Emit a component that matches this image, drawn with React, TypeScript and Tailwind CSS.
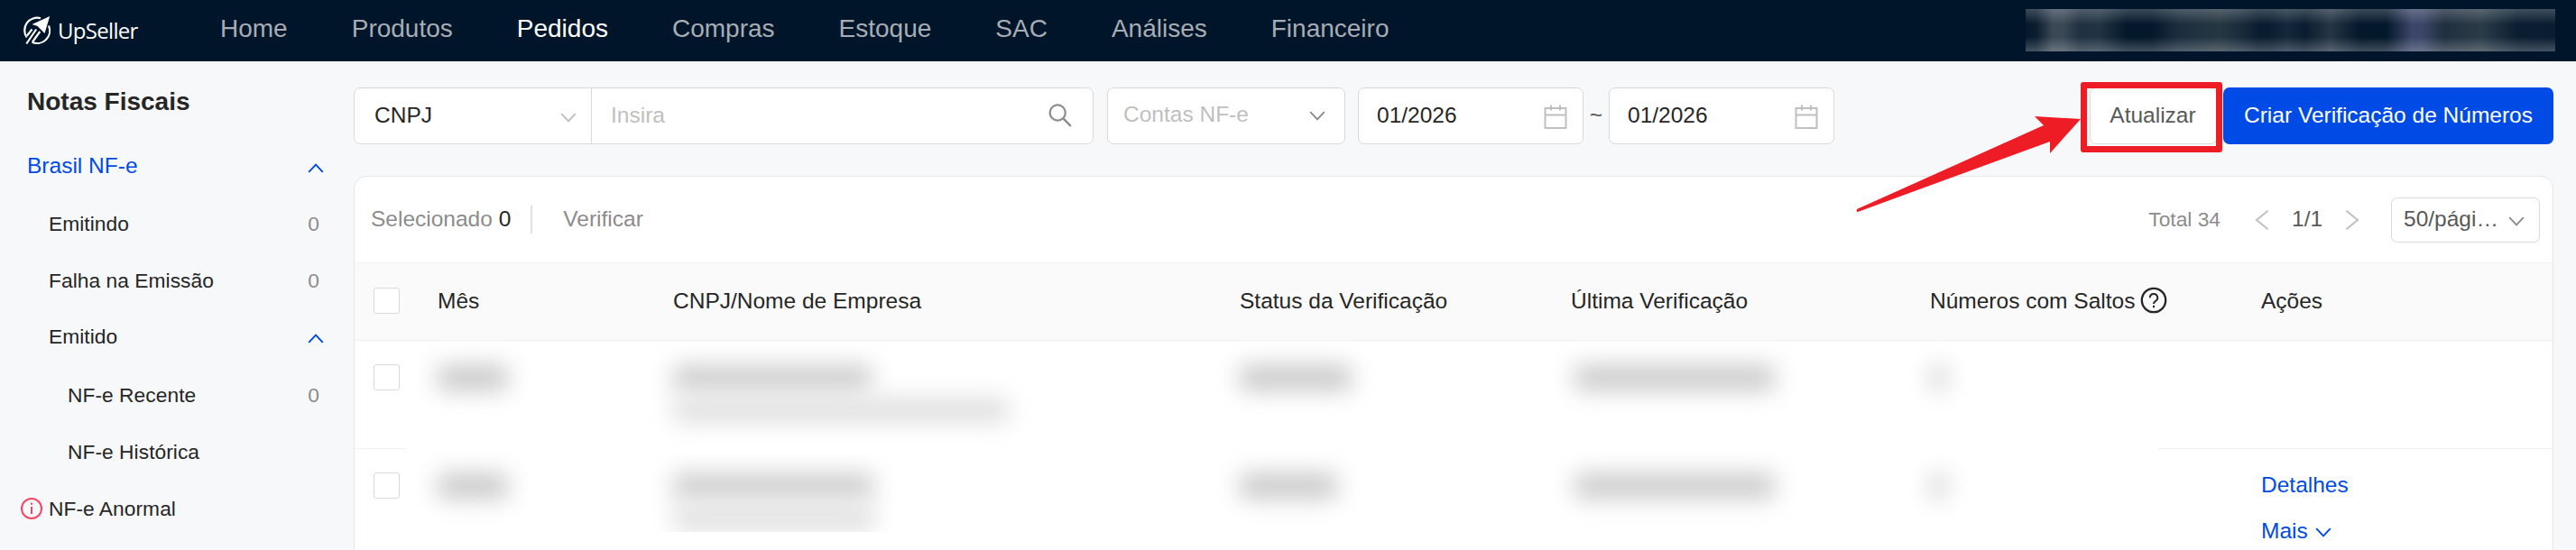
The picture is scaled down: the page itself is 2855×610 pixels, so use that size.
import type { ReactNode } from "react";
import clsx from "clsx";

interface IconProps {
  className?: string;
}

interface SidebarEntry {
  label: string;
  count?: number;
  open?: boolean;
  nested?: boolean;
  alert?: boolean;
  height: string;
}

const navItems = [
  "Home",
  "Produtos",
  "Pedidos",
  "Compras",
  "Estoque",
  "SAC",
  "Análises",
  "Financeiro",
];

const sidebarItems: SidebarEntry[] = [
  { label: "Emitindo", count: 0, height: "h-16" },
  { label: "Falha na Emissão", count: 0, height: "h-[62px]" },
  { label: "Emitido", open: true, height: "h-[63px]" },
  { label: "NF-e Recente", count: 0, nested: true, height: "h-[66px]" },
  { label: "NF-e Histórica", nested: true, height: "h-[60px]" },
  { label: "NF-e Anormal", alert: true, height: "h-[66px]" },
];

const gridCols = "grid grid-cols-[92px_261px_628px_367px_398px_367px_1fr]";

function Chevron({ className }: IconProps) {
  return (
    <svg
      viewBox="0 0 18 11"
      className={clsx("h-[11px] w-[18px] shrink-0", className)}
      fill="none"
      stroke="currentColor"
      strokeWidth="1.9"
    >
      <path d="M1.2 1.2 9 9.4l7.8-8.2" />
    </svg>
  );
}

function PageArrow({ className }: IconProps) {
  return (
    <svg
      viewBox="0 0 16 24"
      className={clsx("h-6 w-4", className)}
      fill="none"
      stroke="currentColor"
      strokeWidth="2"
    >
      <path d="M14.5 1.8 2 12l12.5 10.2" />
    </svg>
  );
}

function SearchIcon() {
  return (
    <svg viewBox="0 0 26 26" className="mb-px size-[26px]" fill="none" stroke="#8c8c8c" strokeWidth="2.2">
      <circle cx="10.2" cy="10" r="8.6" />
      <path d="m16.2 16.2 8.6 8.8" strokeWidth="2.5" />
    </svg>
  );
}

function CalendarIcon() {
  return (
    <svg viewBox="0 0 26 28" className="mt-[3px] h-7 w-[26px]" fill="none" stroke="#bfbfbf" strokeWidth="2">
      <path d="M1.5 4h23v22h-23zM1.5 11.5h23M8 0.5v6M18 0.5v6" />
    </svg>
  );
}

function Logo() {
  return (
    <div className="flex w-[219px] items-center text-white">
      <svg viewBox="0 0 32 32" className="size-8 shrink-0" fill="none" stroke="currentColor">
        <path d="M20 2.2A14 14 0 0 0 4.600 23.500" strokeWidth="2.2" />
        <path d="M29 10.500A14 14 0 0 1 10.500 28.800" strokeWidth="2.2" />
        <path d="M30.200 0 10.500 9 16.500 11 24.500 19z" fill="currentColor" strokeWidth="0" />
        <path d="M10.500 14.500 5 21.500M15.200 14.500 4.300 30.500M19.300 17 11 28.500" strokeWidth="2.200" />
      </svg>
      <span className="ml-[7px] font-['Open_Sans','Noto_Sans',sans-serif] text-[24px] leading-none font-medium tracking-[-0.7px]">
        UpSeller
      </span>
    </div>
  );
}

function Header() {
  return (
    <header className="flex h-[68px] items-center bg-[#001529] pr-[23px] pl-[25px]">
      <Logo />
      <nav className="flex gap-[71px] pb-1 text-[28px] leading-none">
        {navItems.map((item) => (
          <a key={item} className={item === "Pedidos" ? "text-white" : "text-[#a6adb4]"}>
            {item}
          </a>
        ))}
      </nav>
      <div className="relative ml-auto h-[47px] w-[587px] -translate-y-px overflow-hidden bg-[linear-gradient(90deg,#04182b_0,#0b1e30_12px,#3a4856_30px,#3a4856_42px,#203141_60px,#223443_82px,#04182b_112px,#04182b_140px,#1c2d3e_170px,#263743_215px,#192a3b_240px,#0a1d30_258px,#0a1d30_270px,#15283b_290px,#0a1d30_310px,#263545_338px,#04182b_370px,#04182b_400px,#3b4668_428px,#3b4668_440px,#1f2f3f_464px,#2b3c48_505px,#0b1e31_545px,#091c30_587px)]">
        <div className="absolute inset-0 bg-[linear-gradient(180deg,rgba(255,255,255,0.22)_0,rgba(255,255,255,0)_17px,rgba(255,255,255,0)_31px,rgba(255,255,255,0.24)_100%)]" />
      </div>
    </header>
  );
}

function Sidebar() {
  return (
    <aside className="w-[392px] shrink-0 pr-[33px] pl-[30px] text-[22.75px] text-[#262626]">
      <h2 className="flex h-[90px] items-center pb-px text-[28px] font-bold">Notas Fiscais</h2>
      <div className="flex h-[52px] items-center justify-between text-[24.5px] text-[#004be6]">
        Brasil NF-e
        <Chevron className="mt-1 rotate-180" />
      </div>
      <ul className="mt-[6px]">
        {sidebarItems.map((item) => (
          <li key={item.label} className={clsx("flex items-center", item.height)}>
            <span
              className={clsx(
                "flex items-center tracking-[0.05px]",
                item.nested ? "pl-[45px]" : item.alert ? "-ml-[7px]" : "pl-6"
              )}
            >
              {item.alert && (
                <svg viewBox="0 0 24 26" className="mr-[7px] h-[26px] w-6" fill="none" stroke="#f04864">
                  <circle cx="12" cy="13" r="11" strokeWidth="2" />
                  <path d="M12 11v8M12 6.500v2.300" strokeWidth="2" />
                </svg>
              )}
              {item.label}
            </span>
            {item.count !== undefined && (
              <span className="mr-[5px] ml-auto text-[#8c8c8c]">{item.count}</span>
            )}
            {item.open && <Chevron className="mt-1 ml-auto rotate-180 text-[#004be6]" />}
          </li>
        ))}
      </ul>
    </aside>
  );
}

function DateField({ value }: { value: string }) {
  return (
    <div className="flex h-[63px] w-[250px] items-center justify-between rounded-[7px] border border-[#d9d9d9] bg-white pr-[17px] pl-5">
      <span className="pb-[2px]">{value}</span>
      <CalendarIcon />
    </div>
  );
}

function Filters() {
  return (
    <div className="flex items-center text-[24.5px] leading-[28px] text-[#262626]">
      <div className="flex h-[63px] w-[820px] rounded-[7px] border border-[#d9d9d9] bg-white">
        <div className="flex w-[263px] items-center justify-between border-r border-[#d9d9d9] pr-4 pl-[22px]">
          <span className="pb-[2px]">CNPJ</span>
          <Chevron className="mt-1 text-[#bfbfbf]" />
        </div>
        <div className="flex flex-1 items-center justify-between pr-[23px] pl-[21px] text-[#bfbfbf]">
          <span className="pb-[2px]">Insira</span>
          <SearchIcon />
        </div>
      </div>
      <div className="ml-[15px] flex h-[63px] w-[264px] items-center justify-between rounded-[7px] border border-[#d9d9d9] bg-white pr-[21px] pl-[17px] text-[#bfbfbf]">
        <span className="pb-[3px]">Contas NF-e</span>
        <Chevron className="text-[#8c8c8c]" />
      </div>
      <div className="ml-[14px] flex items-center">
        <DateField value="01/2026" />
        <span className="w-[28px] pb-[2px] text-center text-[#595959]">~</span>
        <DateField value="01/2026" />
      </div>
      <div className="relative ml-auto">
        <button className="h-[63px] w-[141px] rounded-[7px] border border-[#d9d9d9] bg-white pr-px pb-[2px] text-[#595959]">
          Atualizar
        </button>
        <div className="absolute -top-[6px] -left-[10px] h-[78px] w-[157px] rounded-[3px] border-[7px] border-[#ee1c25]" />
        <svg viewBox="0 0 252 108" className="absolute top-[31px] -left-[260px] h-[108px] w-[252px]">
          <path
            d="M250 4 199 1l10 10L2 104q-1 3 1 3l213-78v13z"
            fill="#ee1c25"
          />
        </svg>
      </div>
      <button className="ml-[7px] h-[63px] w-[366px] rounded-[7px] bg-[#004be6] pb-[2px] text-white">
        Criar Verificação de Números
      </button>
    </div>
  );
}

function Toolbar() {
  return (
    <div className="flex h-[96px] items-center border-b border-[#f0f0f0] pr-[14px] pl-[18px] text-[24.5px] text-[#8c8c8c]">
      <span>
        Selecionado <span className="text-[#262626]">0</span>
      </span>
      <span className="mr-[34px] ml-[22px] h-[31px] w-[2px] bg-[#e0e0e0]" />
      <span>Verificar</span>
      <div className="ml-auto flex items-center">
        <span className="text-[22.75px]">Total 34</span>
        <PageArrow className="ml-[38px] text-[#bfbfbf]" />
        <span className="ml-[25px] w-[34px] text-[#595959]">1/1</span>
        <PageArrow className="ml-[25px] rotate-180 text-[#bfbfbf]" />
        <div className="ml-[35px] flex h-[50px] w-[165px] items-center justify-between rounded-[7px] border border-[#d9d9d9] pr-[16px] pb-px pl-[13px] text-[#595959]">
          50/pági…
          <Chevron className="mt-1 text-[#8c8c8c]" />
        </div>
      </div>
    </div>
  );
}

function Checkbox() {
  return <span className="block size-[29px] rounded-[3px] border border-[#d9d9d9] bg-white" />;
}

function Masked({ className }: IconProps) {
  return <div className={clsx("rounded-md blur-[13px]", className)} />;
}

interface RowProps {
  companyWidth: string;
  detailWidth: string;
  statusWidth: string;
  maskHeight: string;
  children?: ReactNode;
}

function Row({ companyWidth, detailWidth, statusWidth, maskHeight, children }: RowProps) {
  return (
    <div className={clsx(gridCols, "h-[120px] items-start pt-[26px]")}>
      <div className="pl-[21px]">
        <Checkbox />
      </div>
      <Masked className="mt-px h-[28px] w-[78px] bg-[#c8c8c8]" />
      {/* company name and tax id stay inside the masked area */}
      <div className={clsx("-mt-[20px] -ml-[30px] overflow-hidden pt-[20px] pl-[30px]", maskHeight)}>
        <Masked className={clsx("mt-px h-[28px] bg-[#cccccc]", companyWidth)} />
        <Masked className={clsx("mt-[9px] h-[26px] bg-[#dedede]", detailWidth)} />
      </div>
      <Masked className={clsx("mt-px h-[28px] bg-[#c8c8c8]", statusWidth)} />
      <Masked className="mt-px ml-1 h-[28px] w-[222px] bg-[#cacaca]" />
      <Masked className="mt-px ml-[2px] h-[28px] w-[15px] bg-[#c8c8c8]" />
      <div className="text-[24.5px] leading-[28px] text-[#004be6]">{children}</div>
    </div>
  );
}

function RowDivider() {
  return (
    <div className="-mt-px flex h-px justify-between">
      <span className="w-[57px] bg-[#f0f0f0]" />
      <span className="w-[437px] bg-[#f0f0f0]" />
    </div>
  );
}

function VerificationTable() {
  return (
    <section className="mt-[35px] h-[430px] rounded-t-[14px] border border-[#e4e6ea] bg-white">
      <Toolbar />
      <div
        className={clsx(
          gridCols,
          "h-[86px] items-center border-b border-[#f0f0f0] bg-[#fafafa] text-[24.5px] text-[#262626]"
        )}
      >
        <div className="pb-[2px] pl-[21px]">
          <Checkbox />
        </div>
        <span>Mês</span>
        <span>CNPJ/Nome de Empresa</span>
        <span>Status da Verificação</span>
        <span>Última Verificação</span>
        <span className="flex items-center">
          Números com Saltos
          <svg viewBox="0 0 30 30" className="mb-1 ml-[6px] size-[30px]" fill="none" stroke="currentColor" strokeWidth="2">
            <circle cx="15" cy="15" r="13.200" strokeWidth="2.300" />
            <path d="M10.800 12.200a4.200 4.200 0 1 1 6.300 3.600c-1.500.9-2.100 1.500-2.100 3.200M15 20.800v2.400" />
          </svg>
        </span>
        <span>Ações</span>
      </div>
      <Row companyWidth="w-[220px]" detailWidth="w-[372px]" statusWidth="w-[124px]" maskHeight="h-[114px]" />
      <RowDivider />
      <Row companyWidth="w-[222px]" detailWidth="w-[224px]" statusWidth="w-[108px]" maskHeight="h-[86px]">
        <div>Detalhes</div>
        <div className="mt-[23px] flex items-center">
          Mais
          <Chevron className="mt-[2px] ml-2" />
        </div>
      </Row>
    </section>
  );
}

export default function App() {
  return (
    <div className="h-[610px] w-[2855px] overflow-hidden bg-[#f7f8fa] font-['Liberation_Sans',Arial,sans-serif]">
      <Header />
      <div className="flex">
        <Sidebar />
        <main className="flex-1 pt-[29px] pr-[25px]">
          <Filters />
          <VerificationTable />
        </main>
      </div>
    </div>
  );
}
